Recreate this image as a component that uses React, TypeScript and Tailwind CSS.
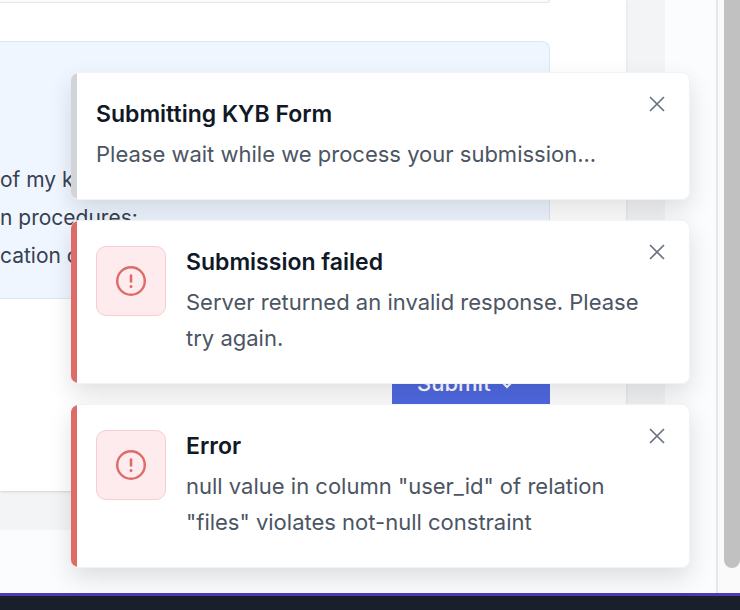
import React from "react";

type ToastProps = {
  title: string;
  message: string;
  tone: "neutral" | "error";
};

function AlertIcon() {
  return (
    <svg viewBox="0 0 32 32" className="size-8" fill="none" stroke="currentColor" strokeWidth="2.4" aria-hidden="true">
      <circle cx="16" cy="16" r="13.8" />
      <path d="M16 10.5v6" strokeWidth="2.6" strokeLinecap="round" />
      <circle cx="16" cy="21.4" r="1.5" fill="currentColor" stroke="none" />
    </svg>
  );
}

function Toast({ title, message, tone }: ToastProps) {
  const isError = tone === "error";
  return (
    <div
      role="status"
      className="relative flex gap-5 overflow-hidden rounded-lg border border-l-0 border-[#f1f2f4] bg-white pt-[23px] pr-12 pb-[27px] pl-[25px] shadow-[0_10px_24px_rgba(0,0,0,0.12)]"
    >
      <span className={`absolute inset-y-0 left-0 w-1.5 ${isError ? "bg-[#dd6b68]" : "bg-[#d1d5d9]"}`} />
      {isError && (
        <span className="mt-0.5 flex size-[70px] shrink-0 items-center justify-center rounded-[10px] border border-[#f8ccd1] bg-[#fdebed] text-[#dd6b68]">
          <AlertIcon />
        </span>
      )}
      <div>
        <h2 className="text-[23px] leading-9 font-semibold text-[#111827]">{title}</h2>
        <p className="mt-1 text-[22px] leading-9 text-[#4b5563]">{message}</p>
      </div>
      <button type="button" aria-label="Close" className="absolute top-[23px] right-6 text-[#6b7280]">
        <svg viewBox="0 0 16 16" className="block size-4" stroke="currentColor" strokeWidth="1.7" aria-hidden="true">
          <path d="M1 1l14 14M15 1L1 15" />
        </svg>
      </button>
    </div>
  );
}

export default function App() {
  return (
    <div className="relative flex h-screen flex-col overflow-hidden bg-[#fbfcfe] font-['Inter',sans-serif]">
      <div className="flex min-h-0 flex-1">
        <main className="min-w-0 flex-1 overflow-hidden pr-[51px]">
          <div className="bg-[#f3f4f6] pr-[39px] pb-[39px]">
            <section className="bg-white pr-[76px] pb-20 shadow-sm">
              <div className="h-[3px] rounded-br-lg border-r border-b border-[#e5e7eb] bg-[#fafafa]" />
              <div className="mt-[38px] rounded-tr-lg border-y border-r border-[#dbe6f8] bg-[#eff6ff] pt-[119px] pb-[23px] text-[21px] leading-[38px] whitespace-nowrap text-[#374151]">
                <p>of my k</p>
                <p>n procedures:</p>
                <p>cation o</p>
              </div>
              <div className="mt-14 flex justify-end">
                <button
                  type="button"
                  className="flex h-14 w-[158px] items-center gap-1.5 bg-[#4f69e2] pl-[25px] text-[22px] font-medium text-white"
                >
                  Submit
                  <svg viewBox="0 0 20 20" className="size-5" fill="none" stroke="currentColor" strokeWidth="2.2" aria-hidden="true">
                    <path d="M4 8l6 6 6-6" />
                  </svg>
                </button>
              </div>
            </section>
          </div>
        </main>
        <div className="w-6 border-l-2 border-[#e7e7e7] bg-[#fafafa] pl-1.5">
          <div className="h-[568px] rounded-b-full bg-[#c1c1c1]" />
        </div>
      </div>
      <footer className="h-[17px] border-t-[3px] border-[#4b3bb5] bg-[#1a1f2c]" />
      <div className="absolute top-[72px] right-[50px] left-[71px] flex flex-col gap-5">
        <Toast tone="neutral" title="Submitting KYB Form" message="Please wait while we process your submission..." />
        <Toast tone="error" title="Submission failed" message="Server returned an invalid response. Please try again." />
        <Toast
          tone="error"
          title="Error"
          message={'null value in column "user_id" of relation "files" violates not-null constraint'}
        />
      </div>
    </div>
  );
}
